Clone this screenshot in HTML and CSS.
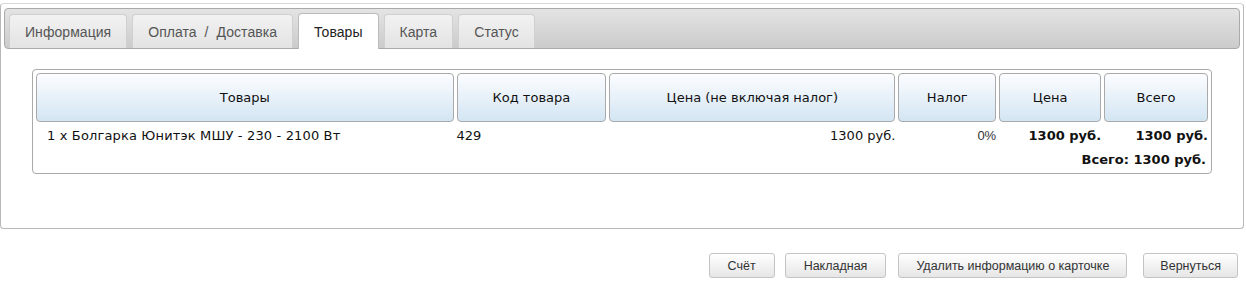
FILE: index.html
```html
<!DOCTYPE html>
<html lang="ru">
<head>
    <meta charset="UTF-8">
    <title>Заказ - Товары</title>
    <link rel="stylesheet" href="styles.css">
</head>
<body>
    <div class="panel">
        <ul class="tabs">
            <li class="tab">Информация</li>
            <li class="tab">Оплата / Доставка</li>
            <li class="tab active">Товары</li>
            <li class="tab">Карта</li>
            <li class="tab">Статус</li>
        </ul>
        <div class="tab-content">
            <div class="products-box">
                <table class="products">
                    <tr>
                        <th class="col-name">Товары</th>
                        <th class="col-model">Код товара</th>
                        <th class="col-price">Цена (не включая налог)</th>
                        <th class="col-tax">Налог</th>
                        <th class="col-unit">Цена</th>
                        <th class="col-total">Всего</th>
                    </tr>
                    <tr>
                        <td class="name">1 x Болгарка Юнитэк МШУ - 230 - 2100 Вт</td>
                        <td>429</td>
                        <td class="right">1300 руб.</td>
                        <td class="right tax">0%</td>
                        <td class="right bold">1300 руб.</td>
                        <td class="right bold">1300 руб.</td>
                    </tr>
                    <tr>
                        <td colspan="6" class="right bold sum">Всего: 1300 руб.</td>
                    </tr>
                </table>
            </div>
        </div>
    </div>
    <div class="buttons">
        <button class="btn">Счёт</button>
        <button class="btn">Накладная</button>
        <button class="btn wide">Удалить информацию о карточке</button>
        <button class="btn back">Вернуться</button>
    </div>
</body>
</html>
```

FILE: styles.css
```css
body {
    margin: 0;
    background-color: #fff;
    font-family: "Liberation Sans", Arial, sans-serif;
}
.panel {
    margin: 3px 2px 0 0;
    height: 216px;
    padding: 4px 3px;
    border: 1px solid #b8b8b8;
    border-top-color: #d8d8d8;
    border-radius: 4px;
}
.tabs {
    display: flex;
    align-items: flex-end;
    gap: 5px;
    height: 39px;
    margin: 0;
    padding: 0 4px;
    list-style: none;
    border: 1px solid #aaa;
    border-radius: 4px;
    background: linear-gradient(#e4e4e4, #cbcbcb);
}
.tab {
    height: 33px;
    line-height: 34px;
    padding: 0 15px;
    border: 1px solid #d0d0d0;
    border-bottom: none;
    border-radius: 4px 4px 0 0;
    background: linear-gradient(#f2f2f2, #e3e3e3);
    color: #555;
    font-size: 14px;
    letter-spacing: 0.05px;
    word-spacing: 4px;
}
.tab.active {
    height: 35px;
    line-height: 36px;
    margin-bottom: -1px;
    border-color: #bbb;
    background: #fff;
    color: #222;
}
.tab-content {
    padding: 20px 28px 0;
}
.products-box {
    border: 1px solid #aaa;
    border-radius: 4px;
}
.products {
    width: 100%;
    border-spacing: 3px;
    font-family: "DejaVu Sans", Verdana, sans-serif;
    font-size: 13px;
    color: #111;
}
.products th {
    height: 47px;
    padding: 0;
    border: 1px solid #aaa;
    border-radius: 4px;
    background: linear-gradient(#fcfdff, #d3e5f3);
    font-weight: normal;
}
.col-name { width: 416px; }
.col-model { width: 148px; }
.col-price { width: 285px; }
.col-tax { width: 96px; }
.col-unit { width: 100px; }
.col-total { width: 102px; }
.products td {
    height: 21px;
    padding: 0;
    white-space: nowrap;
}
.products td.name {
    padding-left: 11px;
    letter-spacing: 0.15px;
}
.right {
    text-align: right;
}
.bold {
    font-weight: bold;
}
.tax {
    font-family: "Liberation Sans", Arial, sans-serif;
    color: #333;
}
.products td.sum {
    padding-right: 2px;
}
.buttons {
    display: flex;
    justify-content: flex-end;
    gap: 10px;
    margin: 24px 8px 0 0;
}
.btn {
    height: 25px;
    padding: 0 18px;
    border: 1px solid #c4c4c4;
    border-radius: 3px;
    background: linear-gradient(#fff, #e6e6e6);
    color: #333;
    font-family: "Liberation Sans", Arial, sans-serif;
    font-size: 12.5px;
}
.btn.wide {
    margin-left: 2px;
    padding: 0 17px;
}
.btn.back {
    margin-left: 6px;
    padding: 0 16px;
}
```
